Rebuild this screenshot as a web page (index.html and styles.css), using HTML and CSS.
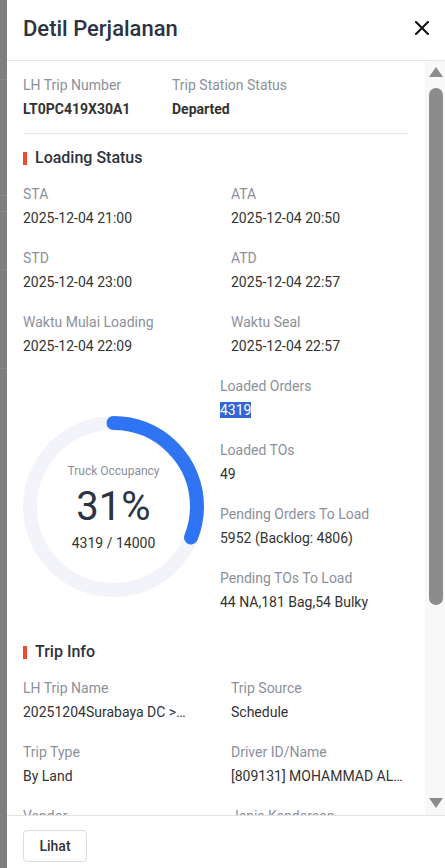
FILE: index.html
```html
<!DOCTYPE html>
<html lang="id">
<head>
    <meta charset="UTF-8">
    <meta name="viewport" content="width=device-width, initial-scale=1.0">
    <title>Detil Perjalanan</title>
    <link rel="stylesheet" href="styles.css">
</head>
<body>
    <div class="page">
        <div class="backdrop">
            <div class="bd-row" style="height: 80px"></div>
            <div class="bd-row" style="height: 116px"></div>
            <div class="bd-row" style="height: 16px"></div>
            <div class="bd-row" style="height: 58px"></div>
            <div class="bd-row" style="height: 99px"></div>
        </div>

        <div class="drawer">
            <div class="drawer-header">
                <h2 class="drawer-title">Detil Perjalanan</h2>
                <button class="close-btn" aria-label="close">
                    <svg width="14" height="14" viewBox="0 0 14 14">
                        <path d="M1 1 L13 13 M13 1 L1 13" stroke="#111" stroke-width="2" stroke-linecap="square"/>
                    </svg>
                </button>
            </div>

            <div class="drawer-body">
                <div class="content">
                    <div class="trip-head">
                        <div class="field first">
                            <div class="label">LH Trip Number</div>
                            <div class="value bold">LT0PC419X30A1</div>
                        </div>
                        <div class="field">
                            <div class="label">Trip Station Status</div>
                            <div class="value bold">Departed</div>
                        </div>
                    </div>
                    <div class="divider"></div>

                    <h3 class="section-title">Loading Status</h3>
                    <div class="grid">
                        <div class="field">
                            <div class="label">STA</div>
                            <div class="value">2025-12-04 21:00</div>
                        </div>
                        <div class="field">
                            <div class="label">ATA</div>
                            <div class="value">2025-12-04 20:50</div>
                        </div>
                        <div class="field">
                            <div class="label">STD</div>
                            <div class="value">2025-12-04 23:00</div>
                        </div>
                        <div class="field">
                            <div class="label">ATD</div>
                            <div class="value">2025-12-04 22:57</div>
                        </div>
                        <div class="field">
                            <div class="label">Waktu Mulai Loading</div>
                            <div class="value">2025-12-04 22:09</div>
                        </div>
                        <div class="field">
                            <div class="label">Waktu Seal</div>
                            <div class="value">2025-12-04 22:57</div>
                        </div>
                    </div>

                    <div class="occupancy">
                        <div class="chart">
                            <svg width="181" height="181" viewBox="0 0 181 181">
                                <circle cx="90.5" cy="90.5" r="83.5" fill="none" stroke="#f3f4f9" stroke-width="14"/>
                                <circle cx="90.5" cy="90.5" r="83.5" fill="none" stroke="#2f74f3" stroke-width="14"
                                    stroke-linecap="round" stroke-dasharray="162.6 524.6"
                                    transform="rotate(-90 90.5 90.5)"/>
                            </svg>
                            <div class="chart-text">
                                <div class="chart-label">Truck Occupancy</div>
                                <div class="chart-percent">31%</div>
                                <div class="chart-count">4319 / 14000</div>
                            </div>
                        </div>
                        <div class="occ-list">
                            <div class="field">
                                <div class="label">Loaded Orders</div>
                                <div class="value"><span class="selected">4319</span></div>
                            </div>
                            <div class="field">
                                <div class="label">Loaded TOs</div>
                                <div class="value">49</div>
                            </div>
                            <div class="field">
                                <div class="label">Pending Orders To Load</div>
                                <div class="value">5952 (Backlog: 4806)</div>
                            </div>
                            <div class="field">
                                <div class="label">Pending TOs To Load</div>
                                <div class="value">44 NA,181 Bag,54 Bulky</div>
                            </div>
                        </div>
                    </div>

                    <h3 class="section-title trip-info">Trip Info</h3>
                    <div class="grid">
                        <div class="field">
                            <div class="label">LH Trip Name</div>
                            <div class="value">20251204Surabaya DC &gt;SOC</div>
                        </div>
                        <div class="field">
                            <div class="label">Trip Source</div>
                            <div class="value">Schedule</div>
                        </div>
                        <div class="field">
                            <div class="label">Trip Type</div>
                            <div class="value">By Land</div>
                        </div>
                        <div class="field">
                            <div class="label">Driver ID/Name</div>
                            <div class="value">[809131] MOHAMMAD ALFARIZI</div>
                        </div>
                        <div class="field">
                            <div class="label">Vendor</div>
                            <div class="value">-</div>
                        </div>
                        <div class="field">
                            <div class="label">Jenis Kendaraan</div>
                            <div class="value">Wingbox</div>
                        </div>
                    </div>
                </div>

                <div class="scrollbar">
                    <div class="arrow up"></div>
                    <div class="thumb"></div>
                    <div class="arrow down"></div>
                </div>
            </div>

            <div class="drawer-footer">
                <button class="btn">Lihat</button>
            </div>
        </div>
    </div>
</body>
</html>
```

FILE: styles.css
```css
* {
    box-sizing: border-box;
}

html, body {
    margin: 0;
    height: 100%;
}

body {
    font-family: Roboto, "Noto Sans", Arial, sans-serif;
    font-size: 14px;
    color: #333;
    background-color: #808080;
}

.page {
    display: flex;
    height: 868px;
}

.backdrop {
    width: 7px;
    flex-shrink: 0;
    background-color: #7e7e7e;
}

.bd-row {
    border-bottom: 1px solid #8a8a8a;
}

.drawer {
    flex: 1;
    display: flex;
    flex-direction: column;
    background: #fff;
    min-width: 0;
}

.drawer-header {
    height: 61px;
    flex-shrink: 0;
    display: flex;
    align-items: center;
    justify-content: space-between;
    padding: 0 16px 4px 16px;
    border-bottom: 1px solid #e5e5ec;
}

.drawer-title {
    margin: 0;
    font-size: 22px;
    font-weight: 500;
    color: #2d3340;
}

.close-btn {
    border: none;
    background: none;
    padding: 0;
    display: flex;
    cursor: pointer;
}

.drawer-body {
    flex: 1;
    display: flex;
    min-height: 0;
}

.content {
    flex: 1;
    min-width: 0;
    overflow: hidden;
    padding: 13px 17px 24px 16px;
}

/* scroll bar of the body */
.scrollbar {
    width: 20px;
    flex-shrink: 0;
    background: #f8f8f8;
    display: flex;
    flex-direction: column;
    align-items: center;
    padding: 6px 0 7px 1px;
}

.arrow {
    width: 0;
    height: 0;
    border-left: 7.5px solid transparent;
    border-right: 7.5px solid transparent;
}

.arrow.up {
    border-bottom: 10px solid #8c8c8c;
}

.arrow.down {
    margin-top: auto;
    border-top: 10px solid #8c8c8c;
}

.thumb {
    margin-top: 11px;
    width: 14px;
    height: 517px;
    border-radius: 7px;
    background: #8c8c8c;
}

.field {
    min-width: 0;
}

.label {
    line-height: 22px;
    color: #8c909b;
}

.value {
    margin-top: 2px;
    line-height: 22px;
    color: #333;
    white-space: nowrap;
    overflow: hidden;
    text-overflow: ellipsis;
}

.value.bold {
    font-weight: 700;
}

.trip-head {
    display: flex;
}

.trip-head .first {
    width: 149px;
}

.divider {
    height: 1px;
    background: #e8e8e8;
    margin: 13px 0 12px;
}

.section-title {
    margin: 0;
    font-size: 16px;
    font-weight: 500;
    line-height: 24px;
    color: #2d3340;
    display: flex;
    align-items: center;
}

.section-title:before {
    content: '';
    width: 4px;
    height: 13px;
    background: #ee4d2d;
    margin-right: 8px;
}

.section-title.trip-info {
    margin-top: 27px;
}

.grid {
    display: grid;
    grid-template-columns: 170px 1fr;
    column-gap: 38px;
    row-gap: 18px;
    margin-top: 13px;
}

.occupancy {
    display: flex;
    margin-top: 18px;
}

.chart {
    width: 197px;
    flex-shrink: 0;
    margin-top: 41px;
    position: relative;
    height: 181px;
}

.chart svg {
    display: block;
}

.chart-text {
    position: absolute;
    top: 0;
    left: 0;
    width: 181px;
    height: 181px;
    display: flex;
    flex-direction: column;
    align-items: center;
    justify-content: center;
    padding-top: 2px;
}

.chart-label {
    font-size: 12px;
    color: #8c909b;
    line-height: 18px;
}

.chart-percent {
    font-size: 40px;
    color: #2d3340;
    line-height: 48px;
    margin-top: 3px;
}

.chart-count {
    font-size: 14px;
    color: #333;
    line-height: 22px;
    margin-top: 1px;
}

.occ-list {
    display: flex;
    flex-direction: column;
    gap: 18px;
    min-width: 0;
}

.selected {
    background: #3367d6;
    color: #fff;
}

.drawer-footer {
    flex-shrink: 0;
    height: 53px;
    border-top: 1px solid #e5e5e5;
    padding: 14px 16px 0;
}

.btn {
    font-family: Roboto, Arial, sans-serif;
    font-size: 14px;
    font-weight: 500;
    color: #333;
    background: #fff;
    border: 1px solid #dcdcdc;
    border-radius: 4px;
    width: 64px;
    height: 32px;
    cursor: pointer;
}
```
